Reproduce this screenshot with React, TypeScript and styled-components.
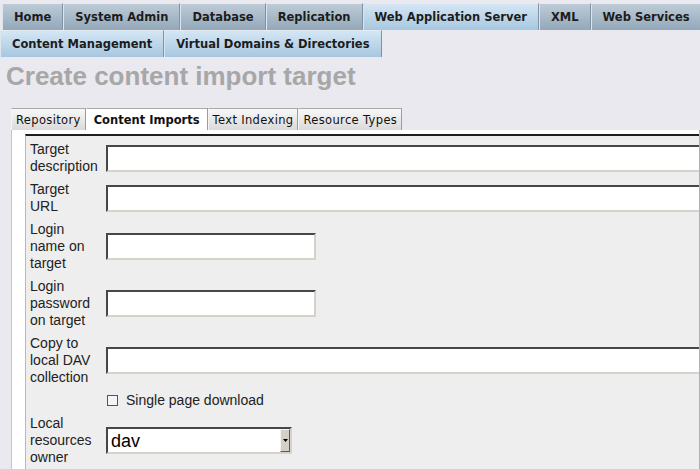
import React from 'react';
import styled, { createGlobalStyle } from 'styled-components';

// ---------- global ----------

const GlobalStyle = createGlobalStyle`
  html, body {
    margin: 0;
    padding: 0;
    overflow: hidden;
    background: #e9e9ef;
  }
  body {
    font-family: "Liberation Sans", Arial, sans-serif;
  }
`;

// ---------- top navigation ----------

const NavRow = styled.div<{ $first?: boolean }>`
  display: flex;
  white-space: nowrap;
  padding: ${(p) => (p.$first ? '3px 0 0 2px' : '0')};
`;

const NavTab = styled.div<{ $active?: boolean }>`
  flex-shrink: 0;
  font-family: "DejaVu Sans", Verdana, sans-serif;
  font-weight: bold;
  font-size: 11.5px;
  color: #1c1c1c;
  padding: 0 11px;
  line-height: 26px;
  border-top: 1px solid #e4ebf1;
  border-left: 1px solid #dde6ed;
  border-right: 1px solid #7d92a4;
  background: ${(p) =>
    p.$active
      ? 'linear-gradient(#d4e6f4, #a7c7e0)'
      : 'linear-gradient(#bdcbd7, #93a8b9)'};
`;

const Title = styled.h1`
  margin: 4px 0 17px 6px;
  font-family: "Liberation Sans", Arial, sans-serif;
  font-size: 26px;
  line-height: 30px;
  font-weight: bold;
  color: #a7a7a7;
`;

// ---------- sub tabs + pane ----------

const Panel = styled.div`
  margin-left: 11px;
`;

const SubTabs = styled.div`
  display: flex;
  white-space: nowrap;
`;

const SubTab = styled.div<{ $active?: boolean }>`
  font-family: "DejaVu Sans", Verdana, sans-serif;
  font-size: 11.5px;
  font-weight: ${(p) => (p.$active ? 'bold' : 'normal')};
  letter-spacing: ${(p) => (p.$active ? '0' : '0.35px')};
  color: #111;
  line-height: 20px;
  padding: 1px ${(p) => (p.$active ? '7px' : '4px')} 0;
  border-top: 1px solid #a9a9a9;
  border-left: 1px solid ${(p) => (p.$active ? '#ffffff' : '#f4f4f4')};
  border-right: 1px solid #9c9c9c;
  background: ${(p) => (p.$active ? '#ffffff' : 'linear-gradient(#f8f8f8, #dadada)')};
`;

const Pane = styled.div`
  background: #ffffff;
  border-left: 1px solid #c4c4c4;
  border-right: 1px solid #b0b0b0;
  padding: 4px 0 0 13px;
  overflow: hidden;
`;

const FormBox = styled.div`
  display: grid;
  grid-template-columns: 70px minmax(0, 1fr);
  column-gap: 6px;
  row-gap: 6px;
  align-items: center;
  padding: 5px 0 8px 4px;
  background: #eeeeee;
  border-top: 2px solid #1e1e1e;
  border-left: 1px solid #b9b9b9;
  overflow: hidden;
`;

const Label = styled.div`
  font-size: 14px;
  line-height: 17px;
  color: #222;
`;

const TextInput = styled.input<{ $short?: boolean }>`
  display: block;
  box-sizing: border-box;
  width: ${(p) => (p.$short ? '210px' : '620px')};
  height: 27px;
  margin: 0;
  padding: 0 3px;
  background: #ffffff;
  border: 2px solid;
  border-color: #474747 #d6d2ca #d6d2ca #474747;
  font-family: "Liberation Sans", Arial, sans-serif;
  font-size: 14px;
  outline: none;
`;

const CheckRow = styled.label`
  display: flex;
  align-items: center;
  gap: 8px;
  padding-left: 1px;
  font-size: 14px;
  line-height: 17px;
  color: #222;
`;

const CheckBox = styled.input`
  appearance: none;
  box-sizing: border-box;
  width: 11px;
  height: 11px;
  margin: 0;
  background: #f4f4f4;
  border: 1px solid #555;
`;

const SelectBox = styled.div`
  display: flex;
  box-sizing: border-box;
  width: 186px;
  height: 27px;
  background: #ffffff;
  border: 2px solid;
  border-color: #474747 #d6d2ca #d6d2ca #474747;
`;

const SelectField = styled.select`
  flex: 1;
  min-width: 0;
  appearance: none;
  border: none;
  outline: none;
  background: transparent;
  margin: 0;
  padding: 0 0 0 3px;
  font-family: "Liberation Sans", Arial, sans-serif;
  font-size: 18px;
  color: #000;
`;

const DropButton = styled.span`
  display: flex;
  align-items: center;
  justify-content: center;
  box-sizing: border-box;
  width: 10px;
  background: #d4d0c8;
  border: 1px solid;
  border-color: #f4f4f4 #5a5a5a #5a5a5a #f4f4f4;
`;

// ---------- data ----------

const mainTabs = [
  { name: 'Home' },
  { name: 'System Admin' },
  { name: 'Database' },
  { name: 'Replication' },
  { name: 'Web Application Server', active: true },
  { name: 'XML' },
  { name: 'Web Services' },
];

const subNav = ['Content Management', 'Virtual Domains & Directories'];

const paneTabs = ['Repository', 'Content Imports', 'Text Indexing', 'Resource Types'];

const fields = [
  { label: 'Target description' },
  { label: 'Target URL' },
  { label: 'Login name on target', short: true },
  { label: 'Login password on target', short: true, password: true },
  { label: 'Copy to local DAV collection' },
];

const App: React.FC = () => {
  return (
    <>
      <GlobalStyle />
      <NavRow $first>
        {mainTabs.map((t) => (
          <NavTab key={t.name} $active={t.active}>
            {t.name}
          </NavTab>
        ))}
      </NavRow>
      <NavRow>
        {subNav.map((n) => (
          <NavTab key={n} $active>
            {n}
          </NavTab>
        ))}
      </NavRow>

      <Title>Create content import target</Title>

      <Panel>
        <SubTabs>
          {paneTabs.map((t) => (
            <SubTab key={t} $active={t === 'Content Imports'}>
              {t}
            </SubTab>
          ))}
        </SubTabs>
        <Pane>
          <FormBox>
            {fields.map((f) => (
              <React.Fragment key={f.label}>
                <Label>{f.label}</Label>
                <div>
                  <TextInput type={f.password ? 'password' : 'text'} $short={f.short} />
                </div>
              </React.Fragment>
            ))}

            <div />
            <CheckRow>
              <CheckBox type="checkbox" />
              Single page download
            </CheckRow>

            <Label>Local resources owner</Label>
            <div>
              <SelectBox>
                <SelectField defaultValue="dav">
                  <option value="dav">dav</option>
                </SelectField>
                <DropButton>
                  <svg width="5" height="3" viewBox="0 0 5 3">
                    <path d="M0 0h5L2.5 3z" fill="#000" />
                  </svg>
                </DropButton>
              </SelectBox>
            </div>
          </FormBox>
        </Pane>
      </Panel>
    </>
  );
};

export default App;
